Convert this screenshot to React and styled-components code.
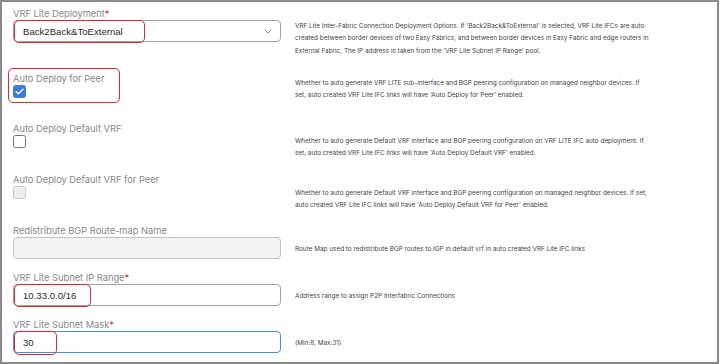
import React from "react";
import styled, { createGlobalStyle } from "styled-components";

const Global = createGlobalStyle`
  html, body { margin: 0; padding: 0; background: #fff; }
  body { font-family: Inter, "Noto Sans", sans-serif; }
`;

const Frame = styled.div`
  box-sizing: border-box;
  width: 719px;
  height: 364px;
  border: 2px solid #8a8a8a;
  background: #fff;
  padding: 5px 0 0 11px;
  overflow: hidden;
`;

const Form = styled.div`
  display: grid;
  grid-template-columns: 268px 1fr;
  grid-template-rows: 65px 50px 51px 51px 47px 47px auto;
  column-gap: 14px;
`;

const Field = styled.div`
  position: relative;
  display: flex;
  flex-direction: column;
  align-items: flex-start;
`;

const Label = styled.div`
  font-family: Inter, "Noto Sans", sans-serif;
  font-size: 9.3px;
  line-height: 13px;
  height: 13px;
  color: #888888;
  white-space: nowrap;
`;

const Req = styled.span`
  color: #d9342b;
`;

const Box = styled.div`
  position: relative;
  box-sizing: border-box;
  width: 268px;
  height: 22px;
  border-radius: 4px;
  border: 1px solid ${(p) => (p.$focus ? "#4b89ee" : p.$disabled ? "#c4c4c4" : "#9ea3a8")};
  background: ${(p) => (p.$disabled ? "#f3f3f3" : "#fff")};
  display: flex;
  align-items: center;
  padding: 0 8px 0 9px;
  font-family: "Liberation Sans", Arial, sans-serif;
  font-size: 9.6px;
  color: #2a2a2a;
`;

const Value = styled.span`
  flex: 1;
  white-space: nowrap;
`;

const Chevron = styled.svg`
  width: 8px;
  height: 5px;
  flex: none;
`;

const Mark = styled.span`
  position: absolute;
  box-sizing: border-box;
  border: 1.5px solid #e3262d;
  border-radius: 5px;
  pointer-events: none;
`;

const Check = styled.div`
  box-sizing: border-box;
  width: 13px;
  height: 13px;
  border-radius: 2.5px;
  display: flex;
  align-items: center;
  justify-content: center;
  ${(p) =>
    p.$checked
      ? "background: #3e7ae0; border: 1px solid #3e7ae0;"
      : p.$disabled
      ? "background: #eeeeee; border: 1px solid #c9c9c9;"
      : "background: #fff; border: 1.5px solid #6f7882;"}
`;

const Desc = styled.div`
  padding-top: ${(p) => p.$offset}px;
  font-family: Inter, "Noto Sans", sans-serif;
  font-size: 6.4px;
  line-height: 12.4px;
  color: #444444;
`;

const Line = styled.div`
  white-space: nowrap;
`;

const ChevronIcon = () => (
  <Chevron viewBox="0 0 8 5">
    <path d="M0.8 0.8 L4 4 L7.2 0.8" fill="none" stroke="#8a8f95" strokeWidth="1" />
  </Chevron>
);

const Tick = () => (
  <svg width="9" height="7" viewBox="0 0 9 7">
    <path d="M1 3.6 L3.4 5.8 L8 1.2" fill="none" stroke="#fff" strokeWidth="1.4" strokeLinecap="round" strokeLinejoin="round" />
  </svg>
);

export default function App() {
  return (
    <>
      <Global />
      <Frame>
        <Form>
          <Field>
            <Label>
              VRF Lite Deployment<Req>*</Req>
            </Label>
            <Box>
              <Value>Back2Back&amp;ToExternal</Value>
              <ChevronIcon />
              <Mark style={{ left: 0, top: -1, width: 131, height: 23 }} />
            </Box>
          </Field>
          <Desc $offset={13}>
            <Line>VRF Lite Inter-Fabric Connection Deployment Options. If 'Back2Back&amp;ToExternal' is selected, VRF Lite IFCs are auto</Line>
            <Line>created between border devices of two Easy Fabrics, and between border devices in Easy Fabric and edge routers in</Line>
            <Line>External Fabric. The IP address is taken from the 'VRF Lite Subnet IP Range' pool.</Line>
          </Desc>

          <Field>
            <Label>Auto Deploy for Peer</Label>
            <Check $checked>
              <Tick />
            </Check>
            <Mark style={{ left: -5, top: -4, width: 112, height: 35 }} />
          </Field>
          <Desc $offset={5}>
            <Line>Whether to auto generate VRF LITE sub-interface and BGP peering configuration on managed neighbor devices. If</Line>
            <Line>set, auto created VRF Lite IFC links will have 'Auto Deploy for Peer' enabled.</Line>
          </Desc>

          <Field>
            <Label>Auto Deploy Default VRF</Label>
            <Check />
          </Field>
          <Desc $offset={13}>
            <Line>Whether to auto generate Default VRF interface and BGP peering configuration on VRF LITE IFC auto deployment. If</Line>
            <Line>set, auto created VRF Lite IFC links will have 'Auto Deploy Default VRF' enabled.</Line>
          </Desc>

          <Field>
            <Label>Auto Deploy Default VRF for Peer</Label>
            <Check $disabled />
          </Field>
          <Desc $offset={14}>
            <Line>Whether to auto generate Default VRF interface and BGP peering configuration on managed neighbor devices. If set,</Line>
            <Line>auto created VRF Lite IFC links will have 'Auto Deploy Default VRF for Peer' enabled.</Line>
          </Desc>

          <Field>
            <Label>Redistribute BGP Route-map Name</Label>
            <Box $disabled />
          </Field>
          <Desc $offset={19}>
            <Line>Route Map used to redistribute BGP routes to IGP in default vrf in auto created VRF Lite IFC links</Line>
          </Desc>

          <Field>
            <Label>
              VRF Lite Subnet IP Range<Req>*</Req>
            </Label>
            <Box>
              <Value>10.33.0.0/16</Value>
              <Mark style={{ left: 0, top: -1, width: 77, height: 23 }} />
            </Box>
          </Field>
          <Desc $offset={19}>
            <Line>Address range to assign P2P Interfabric Connections</Line>
          </Desc>

          <Field>
            <Label>
              VRF Lite Subnet Mask<Req>*</Req>
            </Label>
            <Box $focus>
              <Value>30</Value>
              <Mark style={{ left: 0, top: -1, width: 43, height: 24 }} />
            </Box>
          </Field>
          <Desc $offset={19}>
            <Line>(Min:8, Max:31)</Line>
          </Desc>
        </Form>
      </Frame>
    </>
  );
}
